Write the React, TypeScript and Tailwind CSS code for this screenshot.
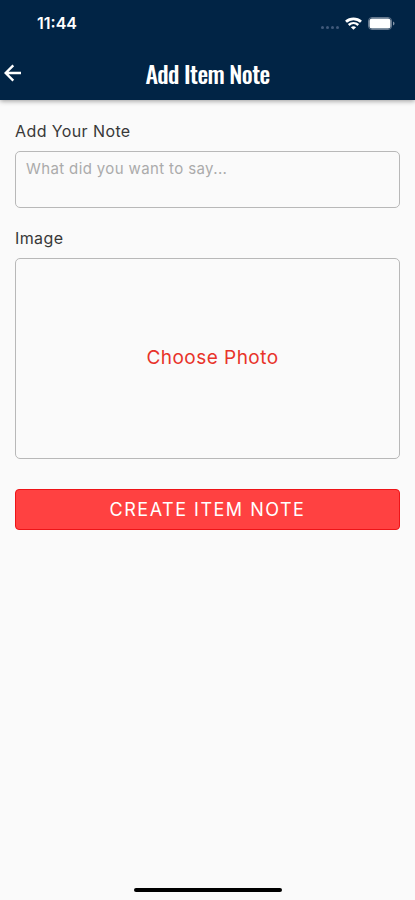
import { clsx } from "clsx";

const StatusBar = () => (
  <div className="flex h-[46px] items-center justify-between pl-[37px] pr-5">
    <span className="text-base font-semibold">11:44</span>
    <div className="flex items-center gap-1.5">
      <div className="mt-2 flex gap-[2px]">
        {[0, 1, 2, 3].map((dot) => (
          <span key={dot} className="h-[3px] w-[3px] rounded-full bg-[#40597a]" />
        ))}
      </div>
      <svg width="17" height="13" viewBox="0 0 17 13" fill="none" stroke="currentColor" aria-hidden="true">
        <path d="M1 4.8C5.2 .9 11.8 .9 16 4.8" strokeWidth="2.8" />
        <path d="M3.7 8C6.5 5.5 10.5 5.5 13.3 8" strokeWidth="2.4" />
        <path d="M8.5 12.8 5.9 10.2C7.4 8.9 9.6 8.9 11.1 10.2Z" fill="currentColor" stroke="none" />
      </svg>
      <svg width="27" height="13" viewBox="0 0 27 13" aria-hidden="true">
        <rect x=".5" y=".5" width="23" height="12" rx="3.5" fill="none" stroke="#66798f" />
        <rect x="1.5" y="1.5" width="21" height="10" rx="2.5" fill="currentColor" />
        <path d="M25 4.5c2 .8 2 3.2 0 4Z" fill="#8494a7" />
      </svg>
    </div>
  </div>
);

const Header = () => (
  <header className="bg-[#012445] text-white shadow-[0_1px_5px_rgba(0,0,0,0.4)]">
    <StatusBar />
    <div className="grid h-[54px] grid-cols-[34px_1fr_34px] items-center">
      <button type="button" aria-label="Back" className="flex h-10 items-center pl-1">
        <svg width="18" height="18" viewBox="0 0 18 18" fill="none" stroke="currentColor" strokeWidth="2.4" aria-hidden="true">
          <path d="M17 9H2M9.3 1.4 1.7 9l7.6 7.6" />
        </svg>
      </button>
      <h1 className="text-center font-['Oswald',sans-serif] text-2xl font-medium tracking-tight">Add Item Note</h1>
    </div>
  </header>
);

const fieldClass = "w-full rounded-[5px] border border-[#b8b8b8]";

const App = () => {
  return (
    <div className="flex min-h-screen flex-col bg-[#fafafa] font-['Inter',sans-serif] text-[#383838]">
      <Header />
      <form className="flex flex-1 flex-col px-[15px] pt-[19px]" onSubmit={(e) => e.preventDefault()}>
        <label htmlFor="note" className="text-base tracking-wide">
          Add Your Note
        </label>
        <textarea
          id="note"
          placeholder="What did you want to say..."
          className={clsx(
            fieldClass,
            "mt-2 h-[57px] resize-none px-2.5 py-1.5 text-[15px] tracking-wide outline-none placeholder:text-[#ababab]"
          )}
        />
        <span id="image-label" className="mt-[18px] text-base tracking-wide">
          Image
        </span>
        <button
          type="button"
          aria-describedby="image-label"
          className={clsx(fieldClass, "mt-2 h-[201px] pl-2.5 text-[19px] tracking-wide text-[#e8332a]")}
        >
          Choose Photo
        </button>
        <button
          type="submit"
          className="mt-[30px] h-[41px] rounded border border-[#ee1418] bg-[#ff4141] text-lg tracking-[1.5px] text-white"
        >
          CREATE ITEM NOTE
        </button>
      </form>
      <div className="mx-auto mb-2 h-1 w-[148px] rounded-full bg-black" />
    </div>
  );
};

export default App;
